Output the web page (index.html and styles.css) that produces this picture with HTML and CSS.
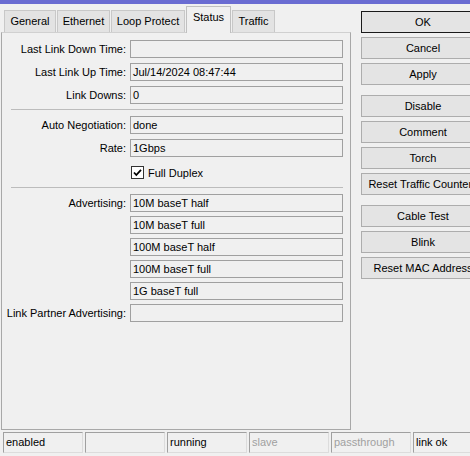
FILE: index.html
```html
<!DOCTYPE html>
<html>
<head>
<meta charset="utf-8">
<link rel="stylesheet" href="styles.css">
</head>
<body>
<div class="titlebar"></div>
<div class="main">
  <div class="left">
    <div class="tabs">
      <div class="tab t-general">General</div>
      <div class="tab t-ethernet">Ethernet</div>
      <div class="tab t-loop">Loop Protect</div>
      <div class="tab active t-status">Status</div>
      <div class="tab t-traffic">Traffic</div>
    </div>
    <div class="panel">
      <div class="form">
        <div class="row"><span class="label">Last Link Down Time:</span><span class="field"></span></div>
        <div class="row"><span class="label">Last Link Up Time:</span><span class="field">Jul/14/2024 08:47:44</span></div>
        <div class="row"><span class="label">Link Downs:</span><span class="field">0</span></div>
        <div class="sep"></div>
        <div class="row"><span class="label">Auto Negotiation:</span><span class="field">done</span></div>
        <div class="row"><span class="label">Rate:</span><span class="field">1Gbps</span></div>
        <div class="row check-row"><span class="label"></span>
          <span class="check">
            <span class="box"><svg width="11" height="11" viewBox="0 0 11 11"><path d="M2 5.5 L4.3 8 L9 2.8" fill="none" stroke="#000" stroke-width="1.8"/></svg></span>
            <span>Full Duplex</span>
          </span>
        </div>
        <div class="sep"></div>
        <div class="row adv"><span class="label">Advertising:</span><span class="field">10M baseT half</span></div>
        <div class="row adv"><span class="label"></span><span class="field">10M baseT full</span></div>
        <div class="row adv"><span class="label"></span><span class="field">100M baseT half</span></div>
        <div class="row adv"><span class="label"></span><span class="field">100M baseT full</span></div>
        <div class="row adv"><span class="label"></span><span class="field">1G baseT full</span></div>
        <div class="row adv partner"><span class="label">Link Partner Advertising:</span><span class="field"></span></div>
      </div>
    </div>
  </div>
  <div class="buttons">
    <div class="btn default">OK</div>
    <div class="btn">Cancel</div>
    <div class="btn">Apply</div>
    <div class="btn group">Disable</div>
    <div class="btn">Comment</div>
    <div class="btn">Torch</div>
    <div class="btn">Reset Traffic Counters</div>
    <div class="btn group">Cable Test</div>
    <div class="btn">Blink</div>
    <div class="btn">Reset MAC Address</div>
  </div>
</div>
<div class="statusbar">
  <div class="cell">enabled</div>
  <div class="cell"></div>
  <div class="cell">running</div>
  <div class="cell dim">slave</div>
  <div class="cell dim">passthrough</div>
  <div class="cell">link ok</div>
</div>
</body>
</html>
```
FILE: styles.css
```css
html, body {
  margin: 0;
  padding: 0;
}
body {
  width: 470px;
  height: 456px;
  overflow: hidden;
  background: #f0f0f0;
  font-family: "Liberation Sans", Arial, sans-serif;
  font-size: 11px;
  color: #000;
}
.titlebar {
  height: 4px;
  background: #6a6cd2;
}
.main {
  display: flex;
  height: 425px;
  padding-top: 3px;
}
.left {
  width: 351px;
  margin-left: 1px;
  display: flex;
  flex-direction: column;
}
.tabs {
  display: flex;
  align-items: flex-end;
  height: 25px;
  padding-left: 3px;
  position: relative;
  z-index: 1;
}
.tab {
  height: 22px;
  box-sizing: border-box;
  border: 1px solid #c8c8c8;
  border-bottom: none;
  background: #e3e3e3;
  display: flex;
  align-items: center;
  justify-content: center;
  margin-right: 1px;
  line-height: 1;
  white-space: nowrap;
}
.t-general { width: 52px; }
.t-ethernet { width: 53px; }
.t-loop { width: 74px; }
.t-status { width: 45px; }
.t-traffic { width: 43px; }
.tab.active {
  height: 27px;
  margin-bottom: -1px;
  background: #f0f0f0;
  border-color: #c0c0c0;
  padding-bottom: 5px;
}
.panel {
  height: 398px;
  box-sizing: border-box;
  border: 1px solid #a8a8a8;
  border-top-color: #d0d0d0;
}
.form {
  padding: 7px 7px 0 0;
}
.row {
  display: flex;
  align-items: center;
  height: 18px;
  margin-bottom: 5px;
}
.row.adv {
  margin-bottom: 4px;
}
.row.partner {
  margin-top: 1px;
}
.label {
  width: 124px;
  text-align: right;
  margin-right: 4px;
  white-space: nowrap;
  flex: none;
}
.field {
  width: 213px;
  height: 18px;
  box-sizing: border-box;
  border: 1px solid #a0a0a0;
  background: #f0f0f0;
  padding-left: 2px;
  line-height: 16px;
  white-space: nowrap;
  overflow: hidden;
}
.sep {
  height: 1px;
  background: #bcbcbc;
  margin: 1px 0 6px 9px;
}
.check-row {
  height: 21px;
  margin-top: 1px;
  margin-bottom: 4px;
}
.check {
  display: flex;
  align-items: center;
  gap: 4px;
  margin-left: 1px;
}
.box {
  width: 13px;
  height: 13px;
  box-sizing: border-box;
  border: 1px solid #333;
  background: #fff;
  display: flex;
  align-items: center;
  justify-content: center;
}
.buttons {
  margin-left: 10px;
  padding-top: 4px;
  display: flex;
  flex-direction: column;
  gap: 4px;
  flex: none;
}
.btn {
  width: 124px;
  height: 22px;
  box-sizing: border-box;
  border: 1px solid #adadad;
  background: #e4e4e4;
  display: flex;
  align-items: center;
  justify-content: center;
  white-space: nowrap;
  overflow: hidden;
  font-size: 11px;
}
.btn.default {
  border-color: #1a1a1a;
}
.btn.group {
  margin-top: 6px;
}
.statusbar {
  display: flex;
  gap: 2px;
  padding-left: 3px;
}
.cell {
  width: 80px;
  height: 21px;
  box-sizing: border-box;
  border: 1px solid #a0a0a0;
  border-right-color: #dcdcdc;
  border-bottom-color: #dcdcdc;
  padding-left: 2px;
  line-height: 19px;
  flex: none;
  white-space: nowrap;
}
.cell.dim {
  color: #a0a0a0;
}
```
